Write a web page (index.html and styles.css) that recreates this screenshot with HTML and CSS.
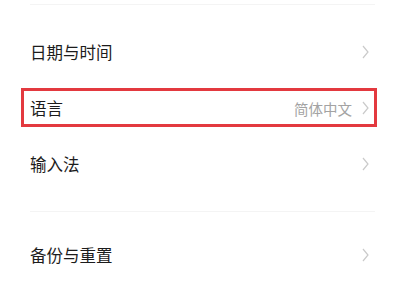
FILE: index.html
```html
<!DOCTYPE html>
<html lang="zh-CN">
<head>
    <meta charset="UTF-8">
    <meta name="viewport" content="width=device-width, initial-scale=1.0">
    <title>设置</title>
    <link rel="stylesheet" href="styles.css">
</head>
<body>
    <div class="settings">
        <div class="section">
            <div class="row">
                <span class="label">日期与时间</span>
                <svg class="arrow" viewBox="0 0 7 14"><polyline points="1,1 6,7 1,13"/></svg>
            </div>
            <div class="row marked">
                <span class="label">语言</span>
                <span class="value">简体中文</span>
                <svg class="arrow" viewBox="0 0 7 14"><polyline points="1,1 6,7 1,13"/></svg>
            </div>
            <div class="row">
                <span class="label">输入法</span>
                <svg class="arrow" viewBox="0 0 7 14"><polyline points="1,1 6,7 1,13"/></svg>
            </div>
        </div>

        <div class="section">
            <div class="row">
                <span class="label">备份与重置</span>
                <svg class="arrow" viewBox="0 0 7 14"><polyline points="1,1 6,7 1,13"/></svg>
            </div>
        </div>
    </div>
</body>
</html>
```

FILE: styles.css
```css
body {
    margin: 0;
    background: #fff;
    font-family: "Noto Sans CJK SC", "Noto Sans", sans-serif;
    color: #1c1c1c;
}

.settings {
    padding: 4px 25px 0 30px;
}

.section {
    border-top: 1px solid #f4f4f4;
    padding: 19px 0 19px;
}

.section + .section {
    padding-top: 15px;
}

.row {
    position: relative;
    display: flex;
    align-items: center;
    height: 56px;
}

.label {
    flex: 1;
    font-size: 16.5px;
}

.value {
    font-size: 14.5px;
    color: #a3a3a3;
    margin-right: 10px;
}

.arrow {
    width: 7px;
    height: 14px;
    margin-right: 6px;
    fill: none;
    stroke: #cacaca;
    stroke-width: 1.2;
}

/* red annotation box */
.marked::after {
    content: "";
    position: absolute;
    left: -9px;
    right: -2px;
    top: 8px;
    bottom: 9px;
    border: 3px solid #e3393f;
}
```
